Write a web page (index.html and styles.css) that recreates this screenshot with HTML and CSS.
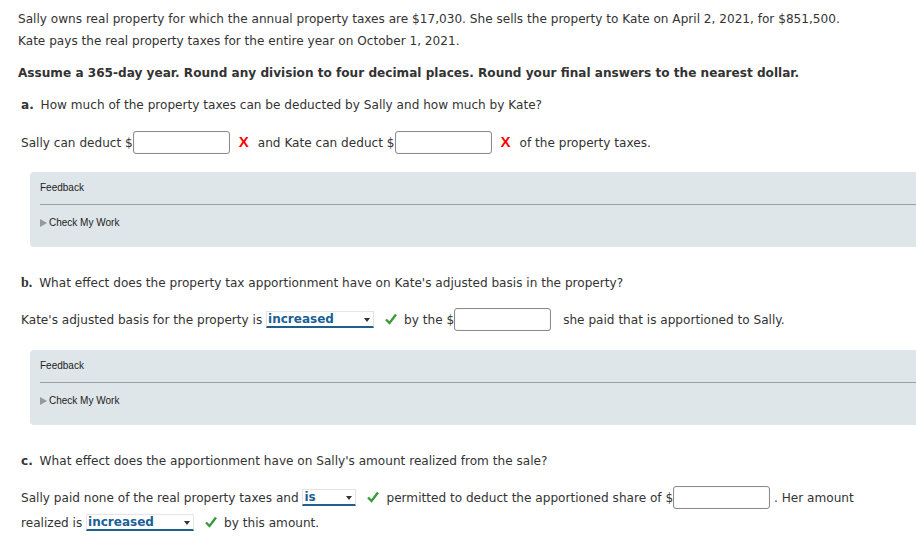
FILE: index.html
```html
<!DOCTYPE html>
<html>
<head>
<meta charset="utf-8">
<link rel="stylesheet" href="styles.css">
</head>
<body>
<div class="page">
  <p class="intro">Sally owns real property for which the annual property taxes are $17,030. She sells the property to Kate on April 2, 2021, for $851,500.<br>Kate pays the real property taxes for the entire year on October 1, 2021.</p>
  <p class="assume">Assume a 365-day year. Round any division to four decimal places. Round your final answers to the nearest dollar.</p>

  <p class="q"><b class="lbl">a.</b> How much of the property taxes can be deducted by Sally and how much by Kate?</p>
  <div class="row">Sally can deduct $<span class="inp"></span><span class="x">X</span>and Kate can deduct $<span class="inp"></span><span class="x">X</span>of the property taxes.</div>
  <div class="feedback">
    <div class="fb-title">Feedback</div>
    <div class="fb-check"><span class="tri"></span>Check My Work</div>
  </div>

  <p class="q qb"><b class="lbl serif">b.</b> What effect does the property tax apportionment have on Kate's adjusted basis in the property?</p>
  <div class="row">Kate's adjusted basis for the property is <span class="sel w108">increased<span class="arr"></span></span><span class="ok"><svg viewBox="0 0 14 14" width="14" height="14"><path d="M2 7.5 L5.5 11 L12 2.5" fill="none" stroke="#3a9a3a" stroke-width="2.4"/></svg></span>by the $<span class="inp"></span><span class="gap"></span>she paid that is apportioned to Sally.</div>
  <div class="feedback">
    <div class="fb-title">Feedback</div>
    <div class="fb-check"><span class="tri"></span>Check My Work</div>
  </div>

  <p class="q qb"><b class="lbl">c.</b> What effect does the apportionment have on Sally's amount realized from the sale?</p>
  <div class="row wrap">Sally paid none of the real property taxes and <span class="sel w54">is<span class="arr"></span></span><span class="ok"><svg viewBox="0 0 14 14" width="14" height="14"><path d="M2 7.5 L5.5 11 L12 2.5" fill="none" stroke="#3a9a3a" stroke-width="2.4"/></svg></span>permitted to deduct the apportioned share of $<span class="inp"></span> . Her amount realized is <span class="sel w108">increased<span class="arr"></span></span><span class="ok"><svg viewBox="0 0 14 14" width="14" height="14"><path d="M2 7.5 L5.5 11 L12 2.5" fill="none" stroke="#3a9a3a" stroke-width="2.4"/></svg></span>by this amount.</div>
</div>
</body>
</html>
```

FILE: styles.css
```css
html, body {
  margin: 0;
  padding: 0;
  background: #fff;
}
body {
  font-family: "DejaVu Sans", Verdana, sans-serif;
  font-size: 12.1px;
  color: #333;
}
.page {
  padding: 8px 0 0 18px;
}
p { margin: 0; }
.intro {
  line-height: 22px;
}
.assume {
  margin-top: 10px;
  line-height: 22px;
  font-weight: bold;
}
.q {
  margin-top: 10px;
  line-height: 22px;
  padding-left: 3px;
}
.qb { margin-top: 25px; }
.lbl { font-weight: bold; margin-right: 3px; }
.serif { font-family: "Liberation Serif", "Times New Roman", serif; font-size: 14px; }
.row {
  margin-top: 13px;
  padding-left: 3px;
  line-height: 24px;
  height: 24px;
  white-space: nowrap;
  padding-top: 1px;
}
.row.wrap {
  height: auto;
  white-space: normal;
  width: 860px;
  line-height: 25px;
}
.inp {
  display: inline-block;
  width: 95px;
  height: 21px;
  border: 1px solid #8a8a8a;
  border-radius: 3px;
  vertical-align: middle;
  box-shadow: inset 0 0 1px #ccc;
  margin-top: -2px;
}
.x {
  display: inline-block;
  color: #f00;
  font-weight: bold;
  font-family: "Liberation Sans", Arial, sans-serif;
  font-size: 15px;
  margin: 0 9px 0 9px;
}
.ok {
  display: inline-block;
  vertical-align: middle;
  margin: -3px 6px 0 10px;
  line-height: 0;
}
.gap { display: inline-block; width: 12px; }
.sel {
  display: inline-block;
  position: relative;
  box-sizing: border-box;
  height: 17px;
  line-height: 14px;
  vertical-align: middle;
  margin-top: -3px;
  border: 1px solid #e4e4e4;
  border-bottom: 2px solid #1f5f8f;
  color: #1a5f96;
  font-weight: bold;
  font-size: 12px;
  padding-left: 1px;
  text-align: left;
}
.w108 { width: 108px; }
.w54 { width: 54px; }
.arr {
  position: absolute;
  right: 3px;
  top: 6px;
  width: 0;
  height: 0;
  border-left: 3px solid transparent;
  border-right: 3px solid transparent;
  border-top: 4px solid #333;
}
.feedback {
  margin: 18px 0 0 12px;
  height: 75px;
  box-sizing: border-box;
  background: #dfe6e9;
  border-radius: 4px 0 0 4px;
  padding: 0 0 0 10px;
  font-family: "Liberation Sans", Arial, sans-serif;
  font-size: 10px;
  color: #222;
}
.fb-title {
  height: 32px;
  line-height: 31px;
  border-bottom: 1px solid #9aa0a3;
}
.fb-check {
  line-height: 36px;
}
.tri {
  display: inline-block;
  width: 0;
  height: 0;
  border-top: 4px solid transparent;
  border-bottom: 4px solid transparent;
  border-left: 7px solid #999;
  margin-right: 2px;
  vertical-align: -1px;
}
```
